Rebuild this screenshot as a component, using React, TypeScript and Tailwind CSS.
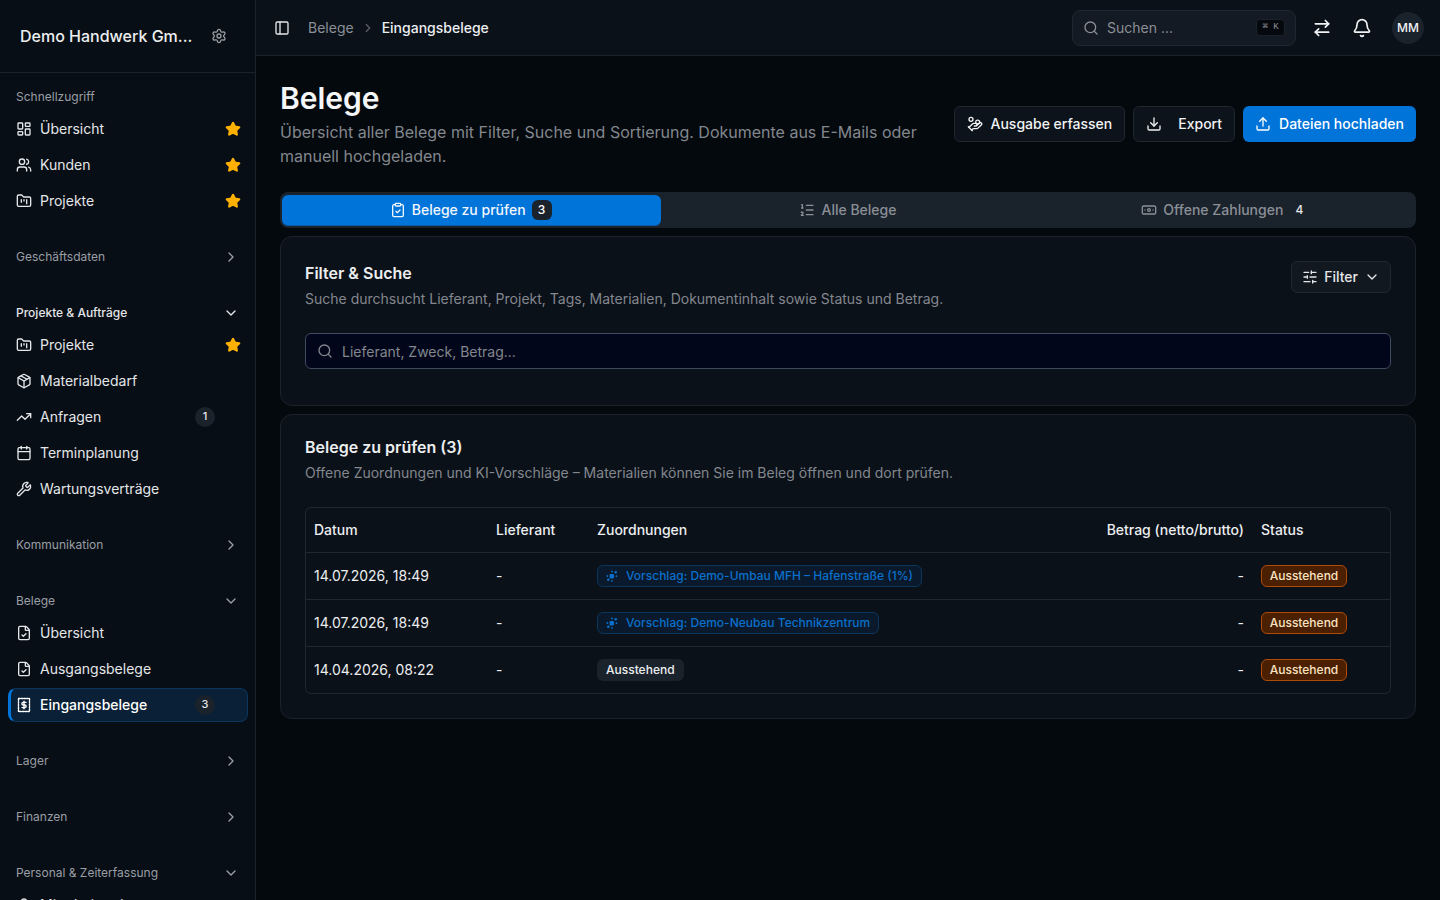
import type { ReactNode } from "react";
import {
  ArrowRightLeft,
  Banknote,
  Bell,
  Calendar,
  ChevronDown,
  ChevronRight,
  ClipboardCheck,
  Download,
  FileCheck,
  FolderKanban,
  HandCoins,
  LayoutDashboard,
  ListOrdered,
  Package,
  PanelLeft,
  Search,
  Settings,
  SlidersHorizontal,
  Star,
  TrendingUp,
  Upload,
  User,
  Users,
  Wrench,
} from "lucide-react";

function ReceiptIcon() {
  return (
    <svg width="16" height="16" viewBox="0 0 16 16" fill="none" stroke="currentColor" strokeWidth="1.4" strokeLinecap="round" strokeLinejoin="round">
      <rect x="2.5" y="1.5" width="11" height="13" strokeDasharray="1.6 1.1" />
      <path d="M10 5.4H7.2a1.3 1.3 0 0 0 0 2.6h1.6a1.3 1.3 0 0 1 0 2.6H6M8 4.2v7.6" />
    </svg>
  );
}

function AiIcon() {
  return (
    <svg width="12" height="12" viewBox="0 0 12 12" fill="currentColor">
      <rect x="3.5" y="4" width="4.5" height="4.5" rx="1" />
      <circle cx="9.7" cy="2.3" r="1.3" />
      <circle cx="2.3" cy="9.7" r="1.3" />
      <circle cx="6" cy="1.5" r="0.9" />
      <circle cx="6" cy="10.8" r="0.9" />
      <circle cx="1.3" cy="6" r="0.9" />
      <circle cx="10.5" cy="6.2" r="0.9" />
    </svg>
  );
}

function NavItem({
  icon,
  label,
  star,
  badge,
  active,
}: {
  icon: ReactNode;
  label: string;
  star?: boolean;
  badge?: string;
  active?: boolean;
}) {
  return (
    <div
      className={
        active
          ? "my-px mr-[7px] ml-2 flex h-[34px] items-center gap-2 rounded-lg border border-[#0c355c] border-l-[3px] border-l-[#0074d9] bg-[#0a2036] pr-[7px] pl-[5px] text-sm font-medium text-white"
          : "mr-[7px] ml-2 flex h-9 items-center gap-2 px-2 text-sm text-[#e4e6e9]"
      }
    >
      <span className="flex w-4 shrink-0 justify-center">{icon}</span>
      <span className="flex-1 truncate">{label}</span>
      {badge && (
        <span className="mr-[25px] flex size-5 items-center justify-center rounded-full bg-[#1a222c] text-[11px] font-medium text-[#e4e6e9]">
          {badge}
        </span>
      )}
      {star && <Star className="-mr-[1px] size-4 fill-[#ffb000] text-[#ffb000]" />}
    </div>
  );
}

function NavGroup({
  label,
  open,
  bright,
  children,
}: {
  label: string;
  open?: boolean;
  bright?: boolean;
  children?: ReactNode;
}) {
  return (
    <div className={open ? "py-3" : "pt-3 pb-4"}>
      <div className={`flex h-7 items-center justify-between pr-4 pl-4 text-xs ${bright ? "font-medium text-[#e4e6e9]" : "text-[#9a9ea5]"}`}>
        <span>{label}</span>
        {open ? <ChevronDown className="size-4" /> : <ChevronRight className="size-4" />}
      </div>
      {children}
    </div>
  );
}

function Sidebar() {
  return (
    <aside className="flex h-full w-64 shrink-0 flex-col overflow-hidden border-r border-[#1a222c] bg-[#080e15]">
      <div className="flex h-[73px] shrink-0 items-center gap-[19px] border-b border-[#1a222c] pl-5">
        <span className="text-base font-medium text-[#eceef0]">Demo Handwerk Gm...</span>
        <Settings className="size-4 text-[#9a9ea5]" />
      </div>
      <div className="pt-[10px]">
        <div className="pb-3">
          <div className="flex h-7 items-center pl-4 text-xs text-[#9a9ea5]">Schnellzugriff</div>
          <NavItem icon={<LayoutDashboard className="size-4" />} label="Übersicht" star />
          <NavItem icon={<Users className="size-4" />} label="Kunden" star />
          <NavItem icon={<FolderKanban className="size-4" />} label="Projekte" star />
        </div>
        <NavGroup label="Geschäftsdaten" />
        <NavGroup label="Projekte & Aufträge" open bright>
          <NavItem icon={<FolderKanban className="size-4" />} label="Projekte" star />
          <NavItem icon={<Package className="size-4" />} label="Materialbedarf" />
          <NavItem icon={<TrendingUp className="size-4" />} label="Anfragen" badge="1" />
          <NavItem icon={<Calendar className="size-4" />} label="Terminplanung" />
          <NavItem icon={<Wrench className="size-4" />} label="Wartungsverträge" />
        </NavGroup>
        <NavGroup label="Kommunikation" />
        <NavGroup label="Belege" open>
          <NavItem icon={<FileCheck className="size-4" />} label="Übersicht" />
          <NavItem icon={<FileCheck className="size-4" />} label="Ausgangsbelege" />
          <NavItem icon={<ReceiptIcon />} label="Eingangsbelege" badge="3" active />
        </NavGroup>
        <NavGroup label="Lager" />
        <NavGroup label="Finanzen" />
        <NavGroup label="Personal & Zeiterfassung" open>
          <NavItem icon={<User className="size-4" />} label="Mitarbeitende" />
        </NavGroup>
      </div>
    </aside>
  );
}

function Topbar() {
  return (
    <header className="flex h-14 shrink-0 items-center border-b border-[#1a222c] bg-[#0b1119] pr-4 pl-[18px]">
      <PanelLeft className="size-4 text-[#e4e6e9]" />
      <span className="ml-[18px] text-sm text-[#8b8f96]">Belege</span>
      <ChevronRight className="mx-[7px] size-[14px] text-[#5d6269]" />
      <span className="text-sm font-medium text-[#eceef0]">Eingangsbelege</span>
      <div className="ml-auto flex h-9 w-56 items-center rounded-lg border border-[#1f2731] bg-[#131a23] pr-[10px] pl-[10px]">
        <Search className="size-4 text-[#8b8f96]" />
        <span className="ml-2 flex-1 text-sm text-[#8b8f96]">Suchen ...</span>
        <span className="flex h-[17px] w-[29px] items-center justify-center rounded border border-[#1a222c] bg-[#05090e] font-['Liberation_Mono',monospace] text-[9px] text-[#8b8f96]">
          ⌘ K
        </span>
      </div>
      <ArrowRightLeft className="ml-4 size-5 text-[#f1f2f3]" />
      <Bell className="ml-5 size-5 text-[#f1f2f3]" />
      <span className="ml-5 flex size-8 items-center justify-center rounded-full bg-[#1a222c] text-xs font-medium text-[#f1f2f3]">MM</span>
    </header>
  );
}

function Toolbar() {
  return (
    <div className="flex items-center justify-between gap-4">
      <div className="w-[650px]">
        <h1 className="text-3xl leading-9 font-semibold text-[#f5f6f7]">Belege</h1>
        <p className="mt-1 text-base leading-6 text-[#83878e]">
          Übersicht aller Belege mit Filter, Suche und Sortierung. Dokumente aus E-Mails oder manuell hochgeladen.
        </p>
      </div>
      <div className="flex gap-2">
        <button className="flex h-9 items-center gap-2 rounded-md border border-[#1f2731] bg-[#0d131b] px-3 text-sm font-medium text-[#f1f2f3]">
          <HandCoins className="size-4" />
          Ausgabe erfassen
        </button>
        <button className="flex h-9 items-center gap-4 rounded-md border border-[#1f2731] bg-[#0d131b] px-3 text-sm font-medium text-[#f1f2f3]">
          <Download className="size-4" />
          Export
        </button>
        <button className="flex h-9 items-center gap-2 rounded-md bg-[#0074d9] px-3 text-sm font-medium text-white">
          <Upload className="size-4" />
          Dateien hochladen
        </button>
      </div>
    </div>
  );
}

function Tabs() {
  return (
    <div className="mt-6 grid h-9 grid-cols-3 items-center rounded-lg bg-[#1a222c] px-[2px] text-sm font-medium">
      <div className="-mr-[2px] flex h-[31px] items-center justify-center gap-[6px] rounded-md border-b border-[#0a5aa5] bg-[#0074d9] pr-[2px] text-[#f1f7fd]">
        <ClipboardCheck className="size-4" />
        Belege zu prüfen
        <span className="flex h-5 w-5 items-center justify-center rounded-md bg-[#1a222c] text-xs text-white">3</span>
      </div>
      <div className="flex items-center justify-center gap-[6px] text-[#8b8f96]">
        <ListOrdered className="size-4" />
        Alle Belege
      </div>
      <div className="flex items-center justify-center gap-[6px] text-[#8b8f96]">
        <Banknote className="size-4" />
        Offene Zahlungen
        <span className="flex h-5 w-5 items-center justify-center text-xs text-[#e4e6e9]">4</span>
      </div>
    </div>
  );
}

function FilterCard() {
  return (
    <section className="mt-2 rounded-xl border border-[#1a222c] bg-[#0b1119] px-6 pt-6 pb-9">
      <div className="flex justify-between">
        <div>
          <h2 className="text-base leading-6 font-semibold text-[#eceef0]">Filter & Suche</h2>
          <p className="mt-1 text-sm leading-5 text-[#83878e]">
            Suche durchsucht Lieferant, Projekt, Tags, Materialien, Dokumentinhalt sowie Status und Betrag.
          </p>
        </div>
        <button className="flex h-8 items-center gap-[6px] rounded-md border border-[#1f2731] bg-[#111820] px-[10px] text-sm font-medium text-[#e4e6e9]">
          <SlidersHorizontal className="size-4" />
          Filter
          <ChevronDown className="size-4" />
        </button>
      </div>
      <div className="mt-6 flex h-9 items-center gap-2 rounded-md border border-[#3d4a60] bg-[#02061a] px-[11px] text-sm text-[#83878e]">
        <Search className="size-4" />
        <span className="mt-[1px] ml-[1px]">Lieferant, Zweck, Betrag...</span>
      </div>
    </section>
  );
}

function Suggestion({ text }: { text: string }) {
  return (
    <span className="inline-flex h-[22px] items-center gap-2 rounded-md border border-[#0c355c] bg-[#0a1a2c] px-2 text-xs font-medium text-[#0a6fca]">
      <AiIcon />
      {text}
    </span>
  );
}

function Pending() {
  return (
    <span className="inline-flex h-[22px] w-[86px] items-center justify-center rounded-md border border-[#b14a06] bg-[#4a2000] text-xs font-medium text-[#fbe3c4]">
      Ausstehend
    </span>
  );
}

function ReceiptsCard() {
  const rows: { date: string; assign: ReactNode }[] = [
    { date: "14.07.2026, 18:49", assign: <Suggestion text="Vorschlag: Demo-Umbau MFH – Hafenstraße (1%)" /> },
    { date: "14.07.2026, 18:49", assign: <Suggestion text="Vorschlag: Demo-Neubau Technikzentrum" /> },
    {
      date: "14.04.2026, 08:22",
      assign: <span className="inline-flex h-[22px] items-center rounded-md bg-[#1a222c] px-[9px] text-xs font-medium text-[#eceef0]">Ausstehend</span>,
    },
  ];

  return (
    <section className="mt-2 rounded-xl border border-[#1a222c] bg-[#0b1119] px-6 pt-5 pb-6">
      <h2 className="text-base leading-6 font-semibold text-[#eceef0]">Belege zu prüfen (3)</h2>
      <p className="mt-1 text-sm leading-5 text-[#83878e]">
        Offene Zuordnungen und KI-Vorschläge – Materialien können Sie im Beleg öffnen und dort prüfen.
      </p>
      <div className="mt-6 overflow-hidden rounded-md border border-[#1f2731]">
        <table className="w-full table-fixed text-sm text-[#eceef0]">
          <thead>
            <tr className="h-[44px] border-b border-[#1f2731] text-left font-medium">
              <th className="w-[182px] px-2 font-medium">Datum</th>
              <th className="w-[101px] px-2 font-medium">Lieferant</th>
              <th className="px-2 font-medium">Zuordnungen</th>
              <th className="w-[163px] px-2 text-right font-medium">Betrag (netto/brutto)</th>
              <th className="w-[138px] pr-2 pl-[9px] font-medium">Status</th>
            </tr>
          </thead>
          <tbody>
            {rows.map((row, index) => (
              <tr key={index} className={index < rows.length - 1 ? "h-[47px] border-b border-[#1f2731]" : "h-[47px]"}>
                <td className="px-2">{row.date}</td>
                <td className="px-2">-</td>
                <td className="px-2">{row.assign}</td>
                <td className="px-2 text-right">-</td>
                <td className="pr-2 pl-[9px]">
                  <Pending />
                </td>
              </tr>
            ))}
          </tbody>
        </table>
      </div>
    </section>
  );
}

export default function App() {
  return (
    <div className="flex h-screen overflow-hidden bg-[#04090d] font-[Inter,sans-serif]">
      <Sidebar />
      <main className="flex min-w-0 flex-1 flex-col">
        <Topbar />
        <div className="px-6 pt-6">
          <Toolbar />
          <Tabs />
          <FilterCard />
          <ReceiptsCard />
        </div>
      </main>
    </div>
  );
}
